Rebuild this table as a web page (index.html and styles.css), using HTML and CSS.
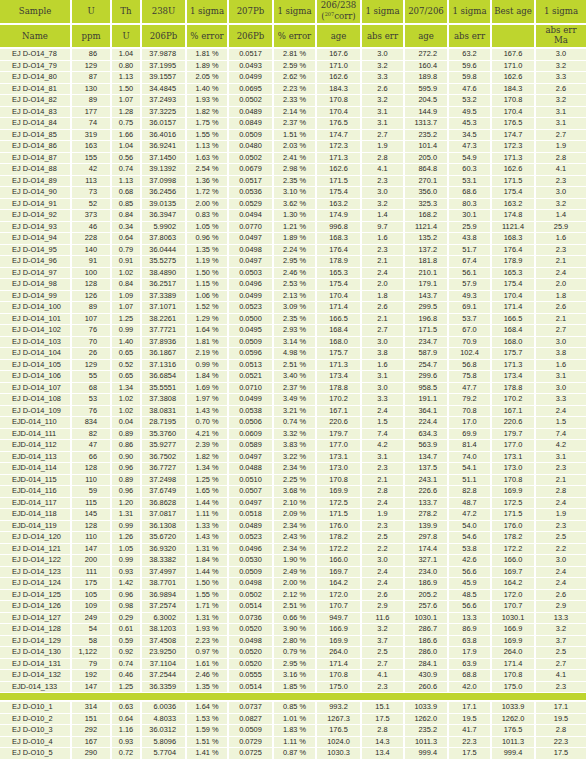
FILE: index.html
```html
<!DOCTYPE html>
<html>
<head>
<meta charset="utf-8">
<link rel="stylesheet" href="styles.css">
</head>
<body>
<table class="tbl">
<colgroup>
<col class="c1"><col class="c2"><col class="c3"><col class="c4"><col class="c5"><col class="c6"><col class="c7"><col class="c8"><col class="c9"><col class="c10"><col class="c11"><col class="c12"><col class="c13">
</colgroup>
<thead>
<tr class="h">
<th>Sample</th><th>U</th><th>Th</th><th>238U</th><th>1 sigma</th><th>207Pb</th><th>1 sigma</th><th class="two">206/238<br>(<span class="sup">207</span>corr)</th><th>1 sigma</th><th>207/206</th><th>1 sigma</th><th>Best age</th><th>1 sigma</th>
</tr>
<tr class="h">
<th>Name</th><th>ppm</th><th>U</th><th>206Pb</th><th>% error</th><th>206Pb</th><th>% error</th><th>age</th><th>abs err</th><th>age</th><th>abs err</th><th></th><th class="two">abs err<br>Ma</th>
</tr>
</thead>
<tbody>
<tr class="d"><td>EJ D-O14_78</td><td>86</td><td>1.04</td><td>37.9878</td><td>1.81 %</td><td>0.0517</td><td>2.81 %</td><td>167.6</td><td>3.0</td><td>272.2</td><td>63.2</td><td>167.6</td><td>3.0</td></tr>
<tr class="d"><td>EJ D-O14_79</td><td>129</td><td>0.80</td><td>37.1995</td><td>1.89 %</td><td>0.0493</td><td>2.59 %</td><td>171.0</td><td>3.2</td><td>160.4</td><td>59.6</td><td>171.0</td><td>3.2</td></tr>
<tr class="d"><td>EJ D-O14_80</td><td>87</td><td>1.13</td><td>39.1557</td><td>2.05 %</td><td>0.0499</td><td>2.62 %</td><td>162.6</td><td>3.3</td><td>189.8</td><td>59.8</td><td>162.6</td><td>3.3</td></tr>
<tr class="d"><td>EJ D-O14_81</td><td>130</td><td>1.50</td><td>34.4845</td><td>1.40 %</td><td>0.0695</td><td>2.23 %</td><td>184.3</td><td>2.6</td><td>595.9</td><td>47.6</td><td>184.3</td><td>2.6</td></tr>
<tr class="d"><td>EJ D-O14_82</td><td>89</td><td>1.07</td><td>37.2493</td><td>1.93 %</td><td>0.0502</td><td>2.33 %</td><td>170.8</td><td>3.2</td><td>204.5</td><td>53.2</td><td>170.8</td><td>3.2</td></tr>
<tr class="d"><td>EJ D-O14_83</td><td>177</td><td>1.28</td><td>37.3225</td><td>1.82 %</td><td>0.0489</td><td>2.14 %</td><td>170.4</td><td>3.1</td><td>144.9</td><td>49.5</td><td>170.4</td><td>3.1</td></tr>
<tr class="d"><td>EJ D-O14_84</td><td>74</td><td>0.75</td><td>36.0157</td><td>1.75 %</td><td>0.0849</td><td>2.37 %</td><td>176.5</td><td>3.1</td><td>1313.7</td><td>45.3</td><td>176.5</td><td>3.1</td></tr>
<tr class="d"><td>EJ D-O14_85</td><td>319</td><td>1.66</td><td>36.4016</td><td>1.55 %</td><td>0.0509</td><td>1.51 %</td><td>174.7</td><td>2.7</td><td>235.2</td><td>34.5</td><td>174.7</td><td>2.7</td></tr>
<tr class="d"><td>EJ D-O14_86</td><td>163</td><td>1.04</td><td>36.9241</td><td>1.13 %</td><td>0.0480</td><td>2.03 %</td><td>172.3</td><td>1.9</td><td>101.4</td><td>47.3</td><td>172.3</td><td>1.9</td></tr>
<tr class="d"><td>EJ D-O14_87</td><td>155</td><td>0.56</td><td>37.1450</td><td>1.63 %</td><td>0.0502</td><td>2.41 %</td><td>171.3</td><td>2.8</td><td>205.0</td><td>54.9</td><td>171.3</td><td>2.8</td></tr>
<tr class="d"><td>EJ D-O14_88</td><td>42</td><td>0.74</td><td>39.1392</td><td>2.54 %</td><td>0.0679</td><td>2.98 %</td><td>162.6</td><td>4.1</td><td>864.8</td><td>60.3</td><td>162.6</td><td>4.1</td></tr>
<tr class="d"><td>EJ D-O14_89</td><td>113</td><td>1.13</td><td>37.0998</td><td>1.36 %</td><td>0.0517</td><td>2.35 %</td><td>171.5</td><td>2.3</td><td>270.1</td><td>53.1</td><td>171.5</td><td>2.3</td></tr>
<tr class="d"><td>EJ D-O14_90</td><td>73</td><td>0.68</td><td>36.2456</td><td>1.72 %</td><td>0.0536</td><td>3.10 %</td><td>175.4</td><td>3.0</td><td>356.0</td><td>68.6</td><td>175.4</td><td>3.0</td></tr>
<tr class="d"><td>EJ D-O14_91</td><td>52</td><td>0.85</td><td>39.0135</td><td>2.00 %</td><td>0.0529</td><td>3.62 %</td><td>163.2</td><td>3.2</td><td>325.3</td><td>80.3</td><td>163.2</td><td>3.2</td></tr>
<tr class="d"><td>EJ D-O14_92</td><td>373</td><td>0.84</td><td>36.3947</td><td>0.83 %</td><td>0.0494</td><td>1.30 %</td><td>174.9</td><td>1.4</td><td>168.2</td><td>30.1</td><td>174.8</td><td>1.4</td></tr>
<tr class="d"><td>EJ D-O14_93</td><td>46</td><td>0.34</td><td>5.9902</td><td>1.05 %</td><td>0.0770</td><td>1.21 %</td><td>996.8</td><td>9.7</td><td>1121.4</td><td>25.9</td><td>1121.4</td><td>25.9</td></tr>
<tr class="d"><td>EJ D-O14_94</td><td>228</td><td>0.64</td><td>37.8063</td><td>0.96 %</td><td>0.0497</td><td>1.89 %</td><td>168.3</td><td>1.6</td><td>135.2</td><td>43.8</td><td>168.3</td><td>1.6</td></tr>
<tr class="d"><td>EJ D-O14_95</td><td>140</td><td>0.79</td><td>36.0444</td><td>1.35 %</td><td>0.0498</td><td>2.24 %</td><td>176.4</td><td>2.3</td><td>137.2</td><td>51.7</td><td>176.4</td><td>2.3</td></tr>
<tr class="d"><td>EJ D-O14_96</td><td>91</td><td>0.91</td><td>35.5275</td><td>1.19 %</td><td>0.0497</td><td>2.95 %</td><td>178.9</td><td>2.1</td><td>181.8</td><td>67.4</td><td>178.9</td><td>2.1</td></tr>
<tr class="d"><td>EJ D-O14_97</td><td>100</td><td>1.02</td><td>38.4890</td><td>1.50 %</td><td>0.0503</td><td>2.46 %</td><td>165.3</td><td>2.4</td><td>210.1</td><td>56.1</td><td>165.3</td><td>2.4</td></tr>
<tr class="d"><td>EJ D-O14_98</td><td>128</td><td>0.84</td><td>36.2517</td><td>1.15 %</td><td>0.0496</td><td>2.53 %</td><td>175.4</td><td>2.0</td><td>179.1</td><td>57.9</td><td>175.4</td><td>2.0</td></tr>
<tr class="d"><td>EJ D-O14_99</td><td>126</td><td>1.09</td><td>37.3389</td><td>1.06 %</td><td>0.0499</td><td>2.13 %</td><td>170.4</td><td>1.8</td><td>143.7</td><td>49.3</td><td>170.4</td><td>1.8</td></tr>
<tr class="d"><td>EJ D-O14_100</td><td>89</td><td>1.07</td><td>37.1071</td><td>1.52 %</td><td>0.0523</td><td>3.09 %</td><td>171.4</td><td>2.6</td><td>299.5</td><td>69.1</td><td>171.4</td><td>2.6</td></tr>
<tr class="d"><td>EJ D-O14_101</td><td>107</td><td>1.25</td><td>38.2261</td><td>1.29 %</td><td>0.0500</td><td>2.35 %</td><td>166.5</td><td>2.1</td><td>196.8</td><td>53.7</td><td>166.5</td><td>2.1</td></tr>
<tr class="d"><td>EJ D-O14_102</td><td>76</td><td>0.99</td><td>37.7721</td><td>1.64 %</td><td>0.0495</td><td>2.93 %</td><td>168.4</td><td>2.7</td><td>171.5</td><td>67.0</td><td>168.4</td><td>2.7</td></tr>
<tr class="d"><td>EJ D-O14_103</td><td>70</td><td>1.40</td><td>37.8936</td><td>1.81 %</td><td>0.0509</td><td>3.14 %</td><td>168.0</td><td>3.0</td><td>234.7</td><td>70.9</td><td>168.0</td><td>3.0</td></tr>
<tr class="d"><td>EJ D-O14_104</td><td>26</td><td>0.65</td><td>36.1867</td><td>2.19 %</td><td>0.0596</td><td>4.98 %</td><td>175.7</td><td>3.8</td><td>587.9</td><td>102.4</td><td>175.7</td><td>3.8</td></tr>
<tr class="d"><td>EJ D-O14_105</td><td>129</td><td>0.52</td><td>37.1316</td><td>0.99 %</td><td>0.0513</td><td>2.51 %</td><td>171.3</td><td>1.6</td><td>254.7</td><td>56.8</td><td>171.3</td><td>1.6</td></tr>
<tr class="d"><td>EJ D-O14_106</td><td>55</td><td>0.65</td><td>36.6854</td><td>1.84 %</td><td>0.0521</td><td>3.40 %</td><td>173.4</td><td>3.1</td><td>299.6</td><td>75.8</td><td>173.4</td><td>3.1</td></tr>
<tr class="d"><td>EJ D-O14_107</td><td>68</td><td>1.34</td><td>35.5551</td><td>1.69 %</td><td>0.0710</td><td>2.37 %</td><td>178.8</td><td>3.0</td><td>958.5</td><td>47.7</td><td>178.8</td><td>3.0</td></tr>
<tr class="d"><td>EJ D-O14_108</td><td>53</td><td>1.02</td><td>37.3808</td><td>1.97 %</td><td>0.0499</td><td>3.49 %</td><td>170.2</td><td>3.3</td><td>191.1</td><td>79.2</td><td>170.2</td><td>3.3</td></tr>
<tr class="d"><td>EJ D-O14_109</td><td>76</td><td>1.02</td><td>38.0831</td><td>1.43 %</td><td>0.0538</td><td>3.21 %</td><td>167.1</td><td>2.4</td><td>364.1</td><td>70.8</td><td>167.1</td><td>2.4</td></tr>
<tr class="d"><td>EJD-014_110</td><td>834</td><td>0.04</td><td>28.7195</td><td>0.70 %</td><td>0.0506</td><td>0.74 %</td><td>220.6</td><td>1.5</td><td>224.4</td><td>17.0</td><td>220.6</td><td>1.5</td></tr>
<tr class="d"><td>EJD-014_111</td><td>82</td><td>0.89</td><td>35.3760</td><td>4.21 %</td><td>0.0609</td><td>3.32 %</td><td>179.7</td><td>7.4</td><td>634.3</td><td>69.9</td><td>179.7</td><td>7.4</td></tr>
<tr class="d"><td>EJD-014_112</td><td>47</td><td>0.86</td><td>35.9277</td><td>2.39 %</td><td>0.0589</td><td>3.83 %</td><td>177.0</td><td>4.2</td><td>563.9</td><td>81.4</td><td>177.0</td><td>4.2</td></tr>
<tr class="d"><td>EJD-014_113</td><td>66</td><td>0.90</td><td>36.7502</td><td>1.82 %</td><td>0.0497</td><td>3.22 %</td><td>173.1</td><td>3.1</td><td>134.7</td><td>74.0</td><td>173.1</td><td>3.1</td></tr>
<tr class="d"><td>EJD-014_114</td><td>128</td><td>0.96</td><td>36.7727</td><td>1.34 %</td><td>0.0488</td><td>2.34 %</td><td>173.0</td><td>2.3</td><td>137.5</td><td>54.1</td><td>173.0</td><td>2.3</td></tr>
<tr class="d"><td>EJD-014_115</td><td>110</td><td>0.89</td><td>37.2498</td><td>1.25 %</td><td>0.0510</td><td>2.25 %</td><td>170.8</td><td>2.1</td><td>243.1</td><td>51.1</td><td>170.8</td><td>2.1</td></tr>
<tr class="d"><td>EJD-014_116</td><td>59</td><td>0.96</td><td>37.6749</td><td>1.65 %</td><td>0.0507</td><td>3.68 %</td><td>169.9</td><td>2.8</td><td>226.6</td><td>82.8</td><td>169.9</td><td>2.8</td></tr>
<tr class="d"><td>EJD-014_117</td><td>115</td><td>1.20</td><td>36.8628</td><td>1.44 %</td><td>0.0497</td><td>2.10 %</td><td>172.5</td><td>2.4</td><td>133.7</td><td>48.7</td><td>172.5</td><td>2.4</td></tr>
<tr class="d"><td>EJD-014_118</td><td>145</td><td>1.31</td><td>37.0817</td><td>1.11 %</td><td>0.0518</td><td>2.09 %</td><td>171.5</td><td>1.9</td><td>278.2</td><td>47.2</td><td>171.5</td><td>1.9</td></tr>
<tr class="d"><td>EJD-014_119</td><td>128</td><td>0.99</td><td>36.1308</td><td>1.33 %</td><td>0.0489</td><td>2.34 %</td><td>176.0</td><td>2.3</td><td>139.9</td><td>54.0</td><td>176.0</td><td>2.3</td></tr>
<tr class="d"><td>EJ D-O14_120</td><td>110</td><td>1.26</td><td>35.6720</td><td>1.43 %</td><td>0.0523</td><td>2.43 %</td><td>178.2</td><td>2.5</td><td>297.8</td><td>54.6</td><td>178.2</td><td>2.5</td></tr>
<tr class="d"><td>EJ D-O14_121</td><td>147</td><td>1.05</td><td>36.9320</td><td>1.31 %</td><td>0.0496</td><td>2.34 %</td><td>172.2</td><td>2.2</td><td>174.4</td><td>53.8</td><td>172.2</td><td>2.2</td></tr>
<tr class="d"><td>EJ D-O14_122</td><td>200</td><td>0.99</td><td>38.3382</td><td>1.84 %</td><td>0.0530</td><td>1.90 %</td><td>166.0</td><td>3.0</td><td>327.1</td><td>42.6</td><td>166.0</td><td>3.0</td></tr>
<tr class="d"><td>EJ D-O14_123</td><td>111</td><td>0.93</td><td>37.4997</td><td>1.44 %</td><td>0.0509</td><td>2.49 %</td><td>169.7</td><td>2.4</td><td>234.0</td><td>56.6</td><td>169.7</td><td>2.4</td></tr>
<tr class="d"><td>EJ D-O14_124</td><td>175</td><td>1.42</td><td>38.7701</td><td>1.50 %</td><td>0.0498</td><td>2.00 %</td><td>164.2</td><td>2.4</td><td>186.9</td><td>45.9</td><td>164.2</td><td>2.4</td></tr>
<tr class="d"><td>EJ D-O14_125</td><td>105</td><td>0.96</td><td>36.9894</td><td>1.55 %</td><td>0.0502</td><td>2.12 %</td><td>172.0</td><td>2.6</td><td>205.2</td><td>48.5</td><td>172.0</td><td>2.6</td></tr>
<tr class="d"><td>EJ D-O14_126</td><td>109</td><td>0.98</td><td>37.2574</td><td>1.71 %</td><td>0.0514</td><td>2.51 %</td><td>170.7</td><td>2.9</td><td>257.6</td><td>56.6</td><td>170.7</td><td>2.9</td></tr>
<tr class="d"><td>EJ D-O14_127</td><td>249</td><td>0.29</td><td>6.3002</td><td>1.31 %</td><td>0.0736</td><td>0.66 %</td><td>949.7</td><td>11.6</td><td>1030.1</td><td>13.3</td><td>1030.1</td><td>13.3</td></tr>
<tr class="d"><td>EJ D-O14_128</td><td>54</td><td>0.61</td><td>38.1203</td><td>1.93 %</td><td>0.0520</td><td>3.90 %</td><td>166.9</td><td>3.2</td><td>286.7</td><td>86.9</td><td>166.9</td><td>3.2</td></tr>
<tr class="d"><td>EJ D-O14_129</td><td>58</td><td>0.59</td><td>37.4508</td><td>2.23 %</td><td>0.0498</td><td>2.80 %</td><td>169.9</td><td>3.7</td><td>186.6</td><td>63.8</td><td>169.9</td><td>3.7</td></tr>
<tr class="d"><td>EJ D-O14_130</td><td>1,122</td><td>0.92</td><td>23.9250</td><td>0.97 %</td><td>0.0520</td><td>0.79 %</td><td>264.0</td><td>2.5</td><td>286.0</td><td>17.9</td><td>264.0</td><td>2.5</td></tr>
<tr class="d"><td>EJ D-O14_131</td><td>79</td><td>0.74</td><td>37.1104</td><td>1.61 %</td><td>0.0520</td><td>2.95 %</td><td>171.4</td><td>2.7</td><td>284.1</td><td>63.9</td><td>171.4</td><td>2.7</td></tr>
<tr class="d"><td>EJ D-O14_132</td><td>192</td><td>0.46</td><td>37.2544</td><td>2.46 %</td><td>0.0555</td><td>3.16 %</td><td>170.8</td><td>4.1</td><td>430.9</td><td>68.8</td><td>170.8</td><td>4.1</td></tr>
<tr class="d"><td>EJD-014_133</td><td>147</td><td>1.25</td><td>36.3359</td><td>1.35 %</td><td>0.0514</td><td>1.85 %</td><td>175.0</td><td>2.3</td><td>260.6</td><td>42.0</td><td>175.0</td><td>2.3</td></tr>
<tr class="sep"><td colspan="13"></td></tr>
<tr class="d"><td>EJ D-O10_1</td><td>314</td><td>0.63</td><td>6.0036</td><td>1.64 %</td><td>0.0737</td><td>0.85 %</td><td>993.2</td><td>15.1</td><td>1033.9</td><td>17.1</td><td>1033.9</td><td>17.1</td></tr>
<tr class="d"><td>EJ D-O10_2</td><td>151</td><td>0.64</td><td>4.8033</td><td>1.53 %</td><td>0.0827</td><td>1.01 %</td><td>1267.3</td><td>17.5</td><td>1262.0</td><td>19.5</td><td>1262.0</td><td>19.5</td></tr>
<tr class="d"><td>EJ D-O10_3</td><td>292</td><td>1.16</td><td>36.0312</td><td>1.59 %</td><td>0.0509</td><td>1.83 %</td><td>176.5</td><td>2.8</td><td>235.2</td><td>41.7</td><td>176.5</td><td>2.8</td></tr>
<tr class="d"><td>EJ D-O10_4</td><td>167</td><td>0.93</td><td>5.8096</td><td>1.51 %</td><td>0.0729</td><td>1.11 %</td><td>1024.0</td><td>14.3</td><td>1011.3</td><td>22.3</td><td>1011.3</td><td>22.3</td></tr>
<tr class="d"><td>EJ D-O10_5</td><td>290</td><td>0.72</td><td>5.7704</td><td>1.41 %</td><td>0.0725</td><td>0.87 %</td><td>1030.3</td><td>13.4</td><td>999.4</td><td>17.5</td><td>999.4</td><td>17.5</td></tr>
</tbody>
</table>
</body>
</html>
```
FILE: styles.css
```css
html, body {
  margin: 0;
  padding: 0;
  background: #ffffff;
}

.tbl {
  width: 586px;
  table-layout: fixed;
  border-collapse: collapse;
  font-family: "Liberation Sans", Arial, sans-serif;
}

.c1 { width: 71px; }
.c2 { width: 40px; }
.c3 { width: 30px; }
.c4 { width: 45px; }
.c5 { width: 42px; }
.c6 { width: 45px; }
.c7 { width: 43px; }
.c8 { width: 45px; }
.c9 { width: 43px; }
.c10 { width: 44px; }
.c11 { width: 43px; }
.c12 { width: 44px; }
.c13 { width: 51px; }

.tbl th,
.tbl td {
  padding: 0;
  border-left: 2px solid #ffffff;
  overflow: hidden;
  white-space: nowrap;
}

.tbl th:first-child,
.tbl td:first-child {
  border-left: 0;
}

.h th {
  background: #bed52e;
  height: 22.5px;
  border-bottom: 2px solid #ffffff;
  font-family: "DejaVu Serif", "Liberation Serif", serif;
  font-weight: normal;
  font-size: 8.6px;
  line-height: 10px;
  color: #3b3b35;
  text-align: center;
  vertical-align: middle;
}

.h th.two {
  line-height: 9.5px;
}

.sup {
  font-size: 5px;
  vertical-align: 3px;
}

.d td {
  background: #eff4d9;
  height: 10.5px;
  border-bottom: 1px solid #ffffff;
  font-size: 7.4px;
  line-height: 10px;
  color: #2a2a26;
  text-align: center;
  vertical-align: middle;
}

.d td:nth-child(1) {
  text-align: left;
  padding-left: 12px;
}

.d td:nth-child(2) {
  text-align: right;
  padding-right: 13px;
}

.d td:nth-child(4) {
  text-align: right;
  padding-right: 9px;
}

.d td:nth-child(10) {
  text-align: right;
  padding-right: 10px;
}

.sep td {
  background: #bed52e;
  height: 7px;
  border-top: 1px solid #ffffff;
  border-bottom: 2px solid #ffffff;
  padding: 0;
}
```
